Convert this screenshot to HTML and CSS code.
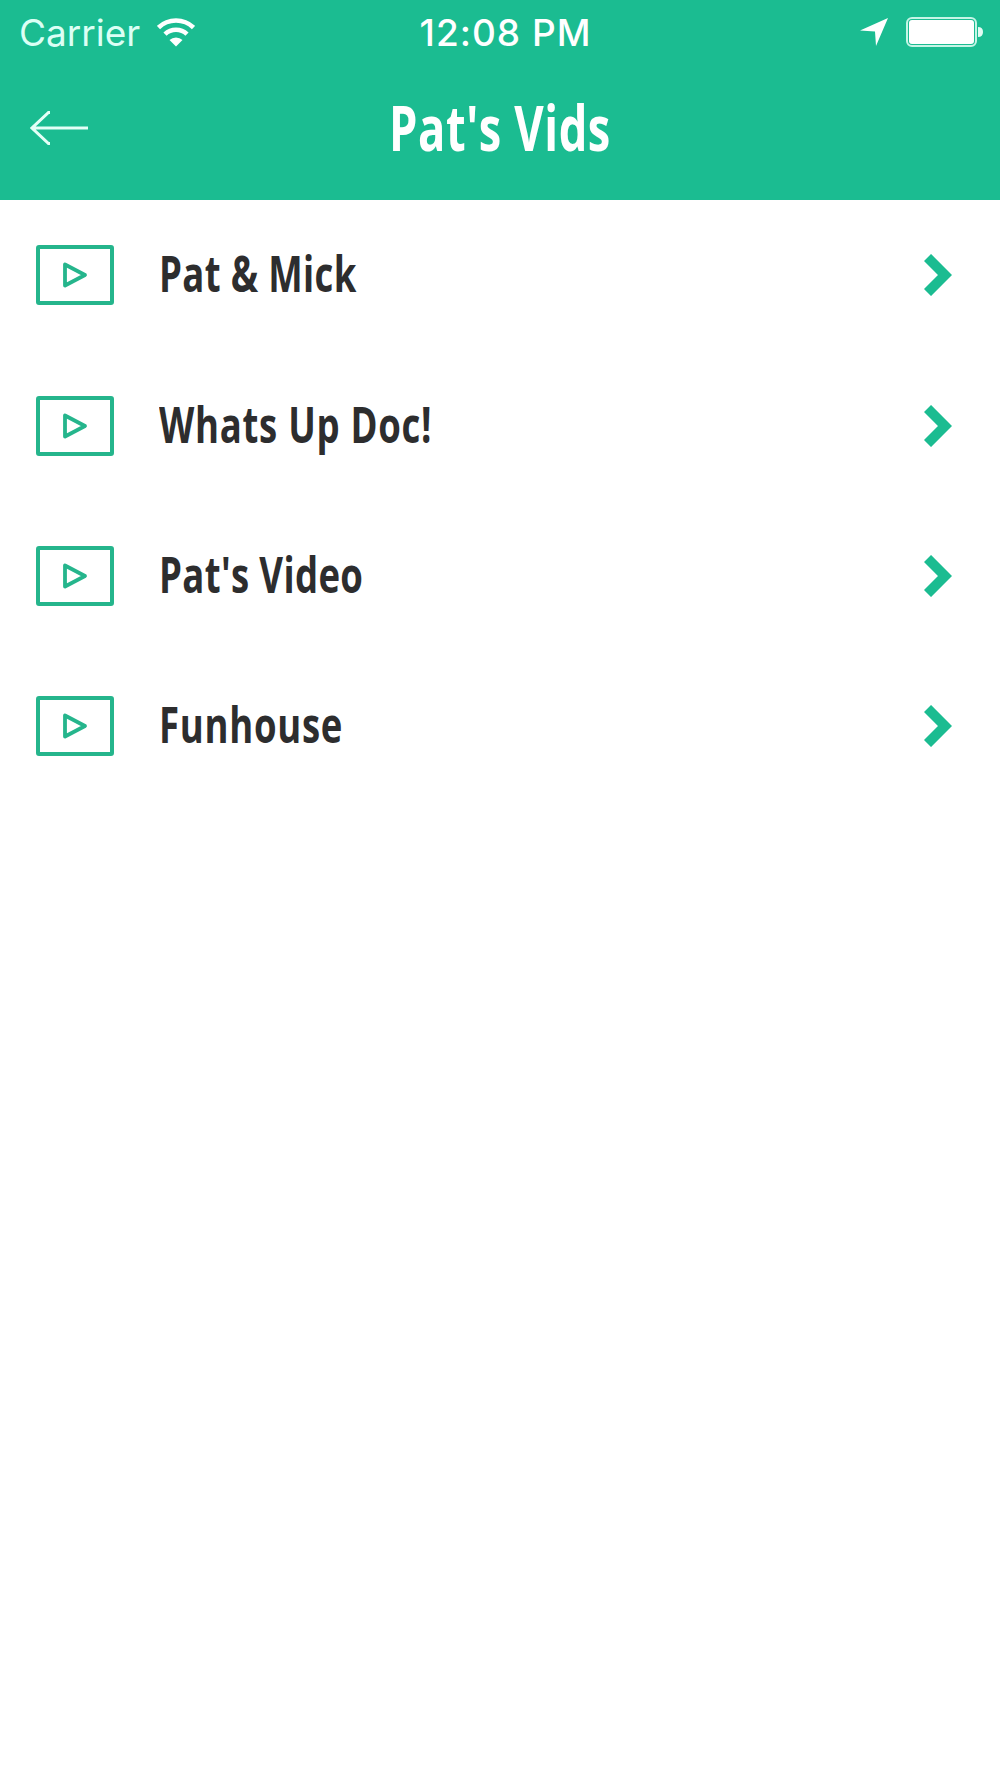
FILE: index.html
```
<!DOCTYPE html>
<html lang="en">
<head>
  <meta charset="UTF-8" />
  <meta name="viewport" content="width=device-width, initial-scale=1.0" />
  <title>Pat's Vids</title>
  <link rel="stylesheet" href="styles.css">
</head>

<body>
  <svg width="0" height="0" class="icon-defs">
    <symbol id="icon-video" viewBox="0 0 78 60">
      <rect x="2" y="2" width="74" height="56" rx="1" fill="none" stroke="currentColor" stroke-width="4"/>
      <path d="M29 19.500V40.500L49 30Z" fill="none" stroke="currentColor" stroke-width="3.800" stroke-linejoin="round"/>
    </symbol>
    <symbol id="icon-chevron" viewBox="0 0 28 42">
      <path d="M3.500 3.500L21 21L3.500 38.500" fill="none" stroke="currentColor" stroke-width="10"/>
    </symbol>
  </svg>

  <header class="header">
    <div class="status-bar">
      <div class="status-left">
        <span class="carrier">Carrier</span>
        <svg class="wifi" viewBox="0 0 38 29">
          <g fill="none" stroke="#fff" stroke-width="4.600">
            <path d="M1.500 9.500A25.500 25.500 0 0 1 36.500 9.500"/>
            <path d="M8 16.200A16 16 0 0 1 30 16.200"/>
          </g>
          <path d="M12.500 22A9.500 9.500 0 0 1 25.500 22L19 28.500Z" fill="#fff"/>
        </svg>
      </div>
      <span class="time">12:08 PM</span>
      <div class="status-right">
        <svg class="location" viewBox="0 0 28 28">
          <path d="M28 0L16 28L15 13.500L0 12.500Z" fill="#fff"/>
        </svg>
        <svg class="battery" viewBox="0 0 78 30">
          <rect x="1" y="1" width="69" height="28" rx="5" fill="none" stroke="#c5f5e6" stroke-width="2"/>
          <rect x="3" y="3" width="65" height="24" rx="3" fill="#fff"/>
          <path d="M72 10Q77 10 77 15T72 20Z" fill="#e2fbf3"/>
        </svg>
      </div>
    </div>
    <div class="nav-bar">
      <a href="#" class="back-link" aria-label="Back">
        <svg class="back-arrow" viewBox="0 0 59 36">
          <path d="M2 18H58M20 2.500H18.500L2 18L18.500 33.500H20" fill="none" stroke="#e4fff7" stroke-width="3"/>
        </svg>
      </a>
      <h1 class="title">Pat's Vids</h1>
    </div>
  </header>

  <ul class="video-list">
    <li class="video-item">
      <svg class="video-icon"><use href="#icon-video"/></svg>
      <span class="video-name">Pat &amp; Mick</span>
      <svg class="chevron"><use href="#icon-chevron"/></svg>
    </li>
    <li class="video-item">
      <svg class="video-icon"><use href="#icon-video"/></svg>
      <span class="video-name wide">Whats Up Doc!</span>
      <svg class="chevron"><use href="#icon-chevron"/></svg>
    </li>
    <li class="video-item">
      <svg class="video-icon"><use href="#icon-video"/></svg>
      <span class="video-name">Pat's Video</span>
      <svg class="chevron"><use href="#icon-chevron"/></svg>
    </li>
    <li class="video-item">
      <svg class="video-icon"><use href="#icon-video"/></svg>
      <span class="video-name wide">Funhouse</span>
      <svg class="chevron"><use href="#icon-chevron"/></svg>
    </li>
  </ul>
</body>
</html>
```
FILE: styles.css
```
* {
  box-sizing: border-box;
}

body {
  font-family: "Open Sans", "Noto Sans", sans-serif;
  background-color: #fff;
  color: #2d2d2e;
  margin: 0;
  padding: 0;
}

svg {
  display: block;
  flex: none;
}

.icon-defs {
  display: none;
}

.header {
  height: 200.4px;
  background-color: #1bbc91;
  color: #fff;
}

.status-bar {
  display: grid;
  grid-template-columns: 1fr auto 1fr;
  align-items: center;
  height: 64px;
  padding: 0 16px 0 19px;
  font-family: Inter, sans-serif;
  font-size: 37px;
}

.status-left,
.status-right {
  display: flex;
  align-items: center;
}

.status-left {
  gap: 17px;
}

.status-right {
  justify-content: flex-end;
  gap: 18px;
}

.carrier {
  color: #dcfff5;
}

.time {
  font-weight: 500;
  letter-spacing: 1px;
  padding-left: 8px;
}

.wifi {
  width: 38px;
  height: 29px;
}

.location {
  width: 28px;
  height: 28px;
}

.battery {
  width: 78px;
  height: 30px;
}

.nav-bar {
  display: grid;
  grid-template-columns: 100px 1fr 100px;
  align-items: center;
  height: 128px;
}

.back-link {
  padding-left: 30px;
}

.back-arrow {
  width: 59px;
  height: 36px;
}

.title {
  margin: 0;
  padding-bottom: 2px;
  font-size: 62px;
  font-weight: 700;
  line-height: 1;
  letter-spacing: 0.8px;
  text-align: center;
  white-space: nowrap;
  transform: scaleX(0.73);
}

.video-list {
  list-style: none;
  margin: 0;
  padding: 0;
}

.video-item {
  display: flex;
  align-items: center;
  height: 150.2px;
  padding: 0 48px 0 36px;
}

.video-icon {
  width: 78px;
  height: 60px;
  color: #25b58c;
}

.video-name {
  flex: 1;
  margin-left: 45px;
  padding-bottom: 4px;
  font-size: 50px;
  font-weight: 700;
  line-height: 1;
  letter-spacing: 0.5px;
  white-space: nowrap;
  transform: scaleX(0.73);
  transform-origin: left center;
}

.video-name.wide {
  letter-spacing: 1px;
}

.chevron {
  width: 28px;
  height: 42px;
  color: #1bbc91;
}
```
